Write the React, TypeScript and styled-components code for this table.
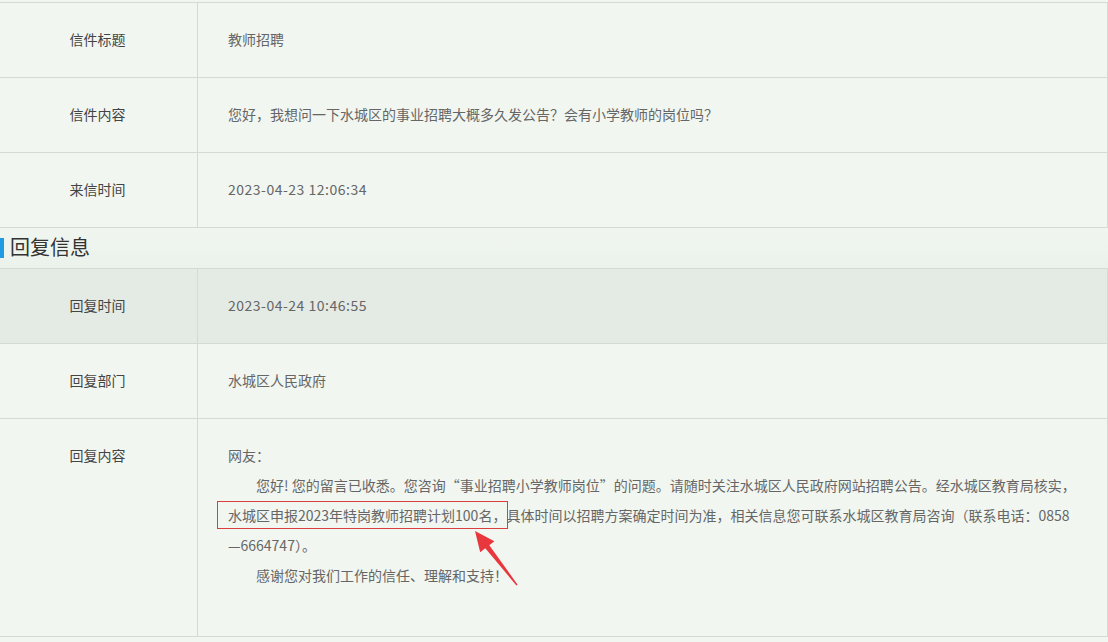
import React from "react";
import styled, { createGlobalStyle } from "styled-components";

const Global = createGlobalStyle`
  html, body { margin: 0; padding: 0; background: #f1f6f1; }
  body { font-family: "Noto Sans CJK SC", "Noto Sans", sans-serif; }
`;

const Page = styled.div`
  width: 1108px;
  height: 642px;
  overflow: hidden;
  padding-top: 2px;
  box-sizing: border-box;
  background: #f1f6f1;
`;

const Table = styled.div<{ $top?: boolean }>`
  border-top: ${(p) => (p.$top ? "1px solid #d3dbd3" : "none")};
  border-right: 1px solid #d3dbd3;
`;

const Row = styled.div<{ $shade?: boolean; $tall?: boolean }>`
  display: grid;
  grid-template-columns: 198px 1fr;
  min-height: ${(p) => (p.$tall ? "217px" : "74px")};
  border-bottom: 1px solid #d3dbd3;
  background: ${(p) => (p.$shade ? "#e4eae4" : "#f1f6f1")};
  align-items: ${(p) => (p.$tall ? "start" : "center")};
`;

const Label = styled.div<{ $tall?: boolean }>`
  align-self: stretch;
  display: flex;
  align-items: ${(p) => (p.$tall ? "flex-start" : "center")};
  justify-content: center;
  border-right: 1px solid #d3dbd3;
  font-size: 14px;
  color: #444;
  padding-top: ${(p) => (p.$tall ? "21px" : "0")};
  padding-bottom: ${(p) => (p.$tall ? "0" : "3px")};
  line-height: 30px;
  padding-right: 2px;
`;

const Value = styled.div`
  padding: 0 30px 3px 30px;
  font-size: 14px;
  color: #666;
  line-height: 30px;
`;

const DateText = styled.span`
  letter-spacing: 0.5px;
`;

const Content = styled.div`
  position: relative;
  padding: 21px 30px 46px 30px;
  font-size: 14px;
  color: #666;
  line-height: 30px;
`;

const Line = styled.div<{ $indent?: boolean }>`
  white-space: nowrap;
  padding-left: ${(p) => (p.$indent ? "28px" : "0")};
`;

const Boxed = styled.span`
  position: relative;
  &::before {
    content: "";
    position: absolute;
    left: -11px;
    right: -2px;
    top: 50%;
    height: 28px;
    margin-top: -14px;
    border: 1px solid #d8403f;
    box-sizing: border-box;
  }
`;

const Arrow = styled.svg`
  position: absolute;
  left: 267px;
  top: 109px;
  width: 56px;
  height: 60px;
`;

const Heading = styled.div`
  height: 40px;
  display: flex;
  align-items: center;
  gap: 6px;
  border-bottom: 1px solid #d3dbd3;
  background: linear-gradient(#f0f5f0, #ebf2eb);
`;

const HeadBar = styled.span`
  width: 4px;
  height: 20px;
  background: #1e9be3;
`;

const HeadText = styled.span`
  font-size: 20px;
  color: #333;
  line-height: 1;
  position: relative;
  top: -1px;
`;

export default function App() {
  return (
    <>
      <Global />
      <Page>
        <Table $top>
          <Row>
            <Label>信件标题</Label>
            <Value>教师招聘</Value>
          </Row>
          <Row>
            <Label>信件内容</Label>
            <Value>您好，我想问一下水城区的事业招聘大概多久发公告？会有小学教师的岗位吗？</Value>
          </Row>
          <Row>
            <Label>来信时间</Label>
            <Value>
              <DateText>2023-04-23 12:06:34</DateText>
            </Value>
          </Row>
        </Table>
        <Heading>
          <HeadBar />
          <HeadText>回复信息</HeadText>
        </Heading>
        <Table>
          <Row $shade>
            <Label>回复时间</Label>
            <Value>
              <DateText>2023-04-24 10:46:55</DateText>
            </Value>
          </Row>
          <Row>
            <Label>回复部门</Label>
            <Value>水城区人民政府</Value>
          </Row>
          <Row $tall>
            <Label $tall>回复内容</Label>
            <Content>
              <Line>网友：</Line>
              <Line $indent>
                您好! 您的留言已收悉。您咨询“事业招聘小学教师岗位”的问题。请随时关注水城区人民政府网站招聘公告。经水城区教育局核实，
              </Line>
              <Line>
                <Boxed>水城区申报2023年特岗教师招聘计划100名，</Boxed>具体时间以招聘方案确定时间为准，相关信息您可联系水城区教育局咨询（联系电话：0858
              </Line>
              <Line>—6664747）。</Line>
              <Line $indent>感谢您对我们工作的信任、理解和支持！</Line>
              <Arrow viewBox="0 0 56 60">
                <polygon
                  points="10,3 29.4,13.3 24.3,17.3 52.6,56.7 51.4,57.5 20.3,20.3 15.2,24.3"
                  fill="#e8383d"
                />
              </Arrow>
            </Content>
          </Row>
        </Table>
      </Page>
    </>
  );
}
